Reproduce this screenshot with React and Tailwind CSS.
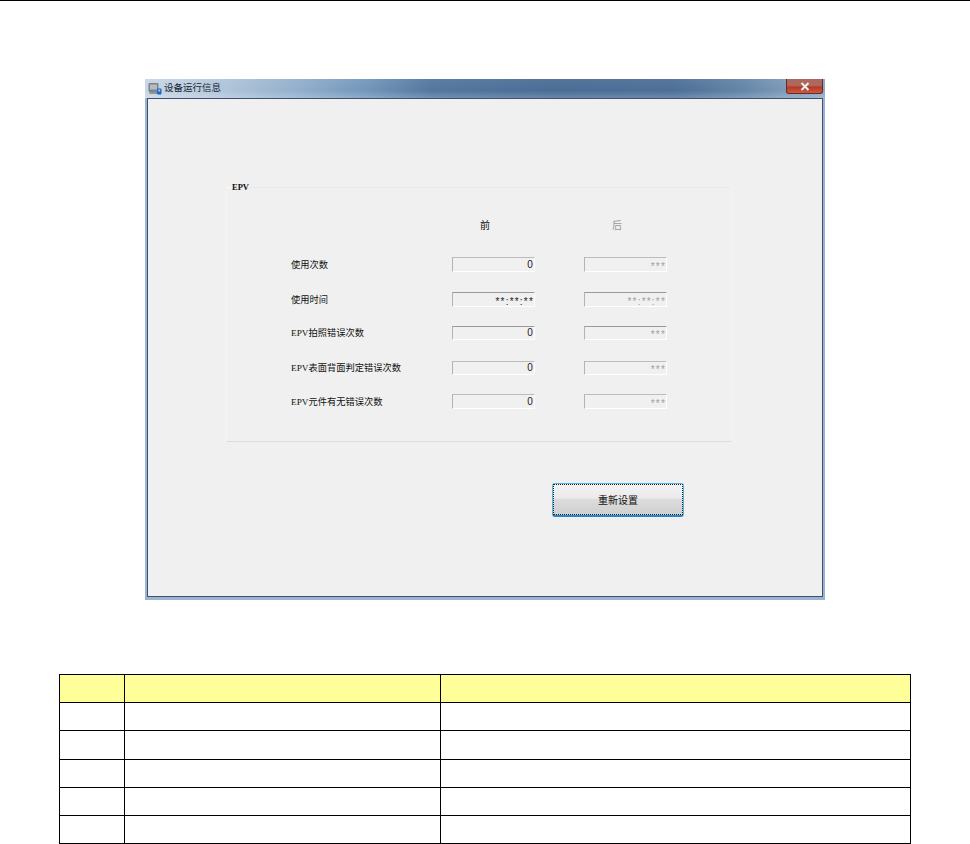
import React from "react";

const cjk = "font-['Noto_Sans_CJK_SC','Liberation_Sans',sans-serif]";
const labelFont = "font-['Liberation_Serif','Noto_Sans_CJK_SC',serif]";

const rows = [
  { label: "使用次数", front: "0", back: "***", gap: "mt-[25px]", h: "h-[15px]" },
  { label: "使用时间", front: "**:**:**", back: "**:**:**", gap: "mt-[20px]", h: "h-[15px]", dark: true },
  { label: "EPV拍照错误次数", front: "0", back: "***", gap: "mt-[19px]", h: "h-[14px]", dark: true },
  { label: "EPV表面背面判定错误次数", front: "0", back: "***", gap: "mt-[21px]", h: "h-[14px]" },
  { label: "EPV元件有无错误次数", front: "0", back: "***", gap: "mt-[19px]", h: "h-[15px]" },
];

const tableRows = ["h-[28px]", "h-[28px]", "h-[29px]", "h-[28px]", "h-[28px]"];

function Field({ value, muted, height, dark }) {
  return (
    <div
      className={`${height} w-[83px] flex items-center justify-end border border-l-[#b4b4b4] border-b-white border-r-white text-[10px] leading-none tracking-[1.2px] font-['Liberation_Sans',sans-serif] ${
        dark ? "border-t-[#9a9a9a]" : "border-t-[#bcbcbc]"
      } ${muted ? "text-[#a0a0a0]" : "text-[#222]"}`}
    >
      <span className={value === "0" ? "" : "pt-[4px]"}>{value}</span>
    </div>
  );
}

function TitleBar() {
  return (
    <div className="h-[19px] flex items-start justify-between pl-[3px] pr-[2px] bg-[linear-gradient(180deg,rgba(255,255,255,0.06)_0%,rgba(255,255,255,0)_60%,rgba(255,255,255,0.18)_100%),linear-gradient(90deg,#c8d6e5_0%,#b4c8dc_10%,#94b0cd_22%,#7195b9_33%,#54779f_42%,#4a6c95_60%,#4d6f97_78%,#6486a8_88%,#7c99b8_94%,#8ea8c4_100%)]">
      <div className="flex items-center h-[18px]">
        <svg width="14" height="13" viewBox="0 0 14 13">
          <rect x="0.5" y="1" width="10" height="9" rx="1" fill="#7d8489" />
          <rect x="2" y="2.5" width="7" height="5" fill="#b4bbc1" />
          <rect x="1.5" y="10" width="8" height="2" fill="#8f969b" />
          <rect x="9" y="6.5" width="4.5" height="6" rx="1" fill="#1b66c4" />
          <rect x="10.2" y="7.5" width="2" height="2" fill="#9ccbf5" />
        </svg>
        <span className={`ml-[2px] text-[9.5px] leading-none text-[#1b2430] ${cjk}`}>设备运行信息</span>
      </div>
      <div className="w-[37px] h-[15px] rounded-b-[3px] border border-t-0 border-[#6b2a25] flex items-center justify-center bg-[linear-gradient(180deg,#a9695f_0%,#b2675c_45%,#b23a28_58%,#cf5a42_100%)]">
        <svg width="12" height="9" viewBox="0 0 12 9">
          <path d="M2.5 1 L9.5 8 M9.5 1 L2.5 8" stroke="#eef0f2" strokeWidth="2" />
        </svg>
      </div>
    </div>
  );
}

function GroupBox() {
  return (
    <div className="ml-[78px] w-[506px] h-[255px] border-b border-b-[#d3dfe9] border-x border-x-[#f4f4f4]">
      <div className="flex items-center h-px">
        <div className="w-[4px] h-px bg-[#f9fbfb]" />
        <span className="mx-px text-[8.5px] leading-none text-[#111] font-['Liberation_Serif',serif] font-bold">EPV</span>
        <div className="flex-1 h-px bg-[#e3ecec]" />
      </div>
      <div className="flex pt-[30px] h-[44px] text-[10px] leading-[13px]">
        <div className={`ml-[253px] w-[10px] text-[#111] ${cjk}`}>前</div>
        <div className={`ml-[122px] w-[10px] text-[#999] ${cjk}`}>后</div>
      </div>
      {rows.map((r) => (
        <div key={r.label} className={`${r.gap} flex items-center pl-[64px]`}>
          <div className={`w-[161px] pt-[2px] text-[9.25px] leading-none text-[#111] ${labelFont}`}>{r.label}</div>
          <Field value={r.front} height={r.h} dark={r.dark} />
          <div className="w-[49px]" />
          <Field value={r.back} height={r.h} muted dark={r.dark} />
        </div>
      ))}
    </div>
  );
}

function ResetButton() {
  return (
    <div className="ml-[404px] mt-[41px] w-[132px] h-[34px] rounded-[3px] border border-[#4fb4e2] border-b-2 border-b-[#2a86cc] bg-[linear-gradient(180deg,#f3f3f3_0%,#ebebeb_45%,#dcdcdc_50%,#cfcfcf_100%)]">
      <div className={`h-full border border-dotted border-[#222] flex items-center justify-center text-[10px] leading-none text-[#111] ${cjk}`}>
        重新设置
      </div>
    </div>
  );
}

export default function App() {
  return (
    <div className="w-[970px] h-[844px] overflow-hidden bg-white">
      <div className="h-px bg-black" />

      <div className="ml-[145px] mt-[78px] w-[680px] h-[521px] flex flex-col bg-[#9db4d0] pb-[3px] px-[2px]">
        <div className="-mx-[2px]">
          <TitleBar />
        </div>
        <div className="flex-1 bg-[#f0f0f0] border border-[#3c5270]">
          <div className="h-[88px]" />
          <GroupBox />
          <ResetButton />
        </div>
      </div>

      <table className="ml-[59px] mt-[74px] w-[852px] table-fixed border-collapse">
        <colgroup>
          <col className="w-[65px]" />
          <col className="w-[316px]" />
          <col />
        </colgroup>
        <tbody>
          {tableRows.map((h, i) => (
            <tr key={i} className={`${h} ${i === 0 ? "bg-[#ffff99]" : ""}`}>
              <td className="border border-black" />
              <td className="border border-black" />
              <td className="border border-black" />
            </tr>
          ))}
          <tr className="h-[28px]">
            <td className="border border-black" />
            <td className="border border-black" />
            <td className="border border-black" />
          </tr>
        </tbody>
      </table>
    </div>
  );
}
